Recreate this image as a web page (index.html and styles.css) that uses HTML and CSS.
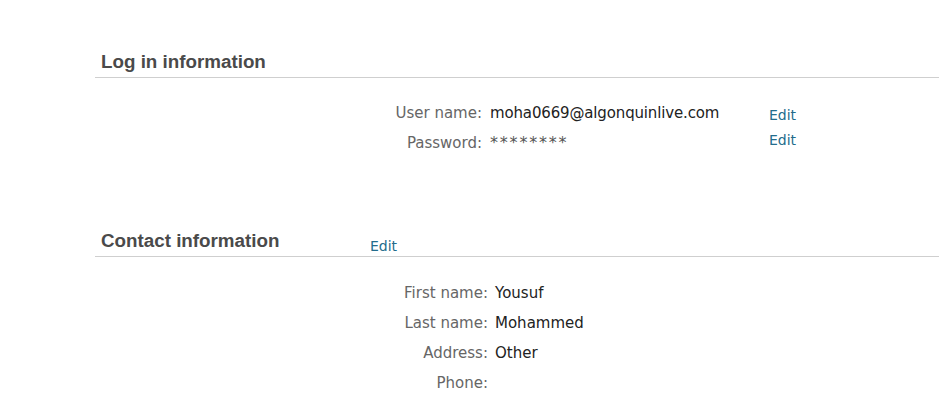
FILE: index.html
```html
<!DOCTYPE html>
<html>
<head>
<meta charset="utf-8">
<link rel="stylesheet" href="styles.css">
</head>
<body>
<div class="page">
  <section class="section login">
    <div class="section-head">
      <h2 class="title">Log in information</h2>
    </div>
    <div class="login-body">
      <div class="fields login-fields">
        <div class="label">User name:</div>
        <div class="value email">moha0669@algonquinlive.com</div>
        <div class="label">Password:</div>
        <div class="value mask">********</div>
      </div>
      <div class="edits">
        <a class="edit" href="#">Edit</a>
        <a class="edit" href="#">Edit</a>
      </div>
    </div>
  </section>
  <section class="section contact">
    <div class="section-head">
      <h2 class="title contact-title">Contact information</h2>
      <a class="edit head-edit" href="#">Edit</a>
    </div>
    <div class="fields contact-fields">
      <div class="label">First name:</div>
      <div class="value">Yousuf</div>
      <div class="label">Last name:</div>
      <div class="value">Mohammed</div>
      <div class="label">Address:</div>
      <div class="value">Other</div>
      <div class="label">Phone:</div>
      <div class="value"></div>
    </div>
  </section>
</div>
</body>
</html>
```

FILE: styles.css
```css
html, body {
  margin: 0;
  padding: 0;
  background: #ffffff;
}

body {
  font-family: "DejaVu Sans", Verdana, sans-serif;
  font-size: 15px;
  color: #222222;
}

.page {
  padding: 51px 0 0 95px;
}

.section-head {
  display: flex;
  align-items: flex-start;
  height: 22px;
  border-bottom: 1px solid #cfcfcf;
  padding: 0 0 4px 6px;
}

.title {
  margin: 0;
  font-family: "Liberation Sans", Arial, sans-serif;
  font-weight: bold;
  font-size: 18.8px;
  line-height: 22px;
  color: #4a4a4a;
}

.contact-title {
  width: 269px;
  flex: none;
}

.edit {
  font-size: 14px;
  line-height: 25px;
  color: #236c8c;
  text-decoration: none;
  display: block;
}

.head-edit {
  margin-top: 9px;
  line-height: 14px;
}

.login-body {
  display: flex;
  padding-top: 20px;
}

.fields {
  display: grid;
  line-height: 30px;
}

.login-fields {
  grid-template-columns: 387px 271px;
  column-gap: 8px;
}

.contact-fields {
  grid-template-columns: 393px auto;
  column-gap: 7px;
  padding-top: 21px;
}

.label {
  text-align: right;
  color: #666666;
}

.value {
  color: #222222;
  min-height: 30px;
}

.email {
  letter-spacing: -0.15px;
}

.mask {
  color: #555555;
  font-size: 16px;
  letter-spacing: 1.8px;
}

.edits {
  margin-left: 8px;
  padding-top: 5px;
  display: flex;
  flex-direction: column;
}

.contact {
  margin-top: 72px;
}
```
